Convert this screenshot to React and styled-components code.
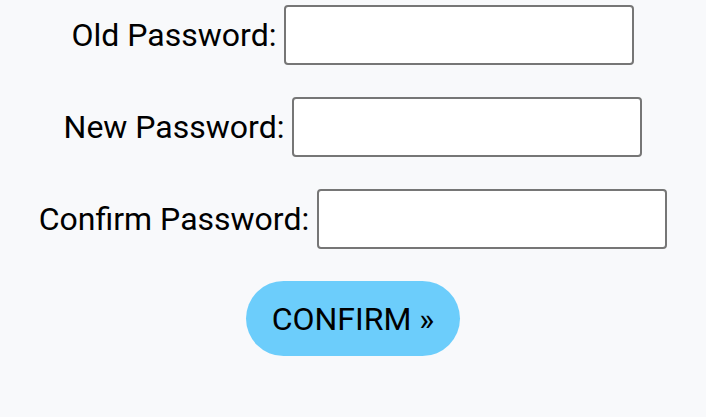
import React from "react";
import styled, { createGlobalStyle } from "styled-components";

const GlobalStyle = createGlobalStyle`
  html, body {
    margin: 0;
    padding: 0;
    background: #f8f9fb;
    font-family: Roboto, "Liberation Sans", sans-serif;
  }
`;

const Form = styled.form`
  display: flex;
  flex-direction: column;
  align-items: center;
  gap: 32px;
  padding-top: 5px;
`;

const Row = styled.div`
  display: flex;
  align-items: center;
  gap: 8px;
`;

const Label = styled.label`
  font-size: 32px;
  color: #000;
`;

const Input = styled.input`
  box-sizing: border-box;
  width: 350px;
  height: 60px;
  border: 2px solid #767676;
  border-radius: 4px;
  background: #fff;
  font-size: 26px;
  padding: 0 8px;
  outline: none;
`;

const Button = styled.button`
  box-sizing: border-box;
  height: 75px;
  padding: 0 26px;
  min-width: 213px;
  border: none;
  border-radius: 38px;
  background: #6ccdfb;
  color: #000;
  font-family: Roboto, "Liberation Sans", sans-serif;
  font-size: 32px;
  cursor: pointer;
`;

const fields = [
  { id: "old", label: "Old Password:" },
  { id: "new", label: "New Password:" },
  { id: "confirm", label: "Confirm Password:" },
];

export default function App() {
  return (
    <>
      <GlobalStyle />
      <Form onSubmit={(e) => e.preventDefault()}>
        {fields.map((f) => (
          <Row key={f.id}>
            <Label htmlFor={f.id}>{f.label}</Label>
            <Input id={f.id} type="password" />
          </Row>
        ))}
        <Button type="submit">CONFIRM »</Button>
      </Form>
    </>
  );
}
